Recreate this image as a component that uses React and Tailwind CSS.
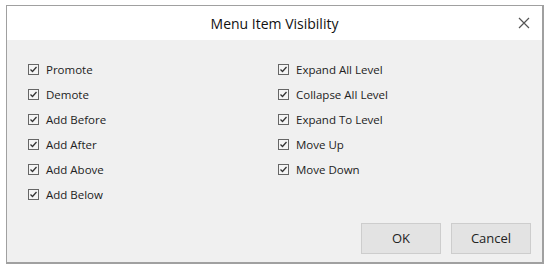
const left = ["Promote", "Demote", "Add Before", "Add After", "Add Above", "Add Below"];
const right = ["Expand All Level", "Collapse All Level", "Expand To Level", "Move Up", "Move Down"];

function Check({ label }) {
  return (
    <label className="flex h-[25px] items-center gap-[7px]">
      <span className="flex h-[11px] w-[11px] items-center justify-center border border-[#666] bg-[#f4f4f4]">
        <svg width="9" height="9" viewBox="0 0 9 9" fill="none">
          <path d="M1.5 4.5 L3.5 6.5 L7.5 2" stroke="#333" strokeWidth="1.3" />
        </svg>
      </span>
      <span className="text-[11.5px] text-[#222]">{label}</span>
    </label>
  );
}

export default function App() {
  return (
    <div
      className="h-[270px] w-[549px] bg-white pl-[6px] pt-[5px]"
      style={{ fontFamily: '"Segoe UI", "Open Sans", "Noto Sans", sans-serif' }}
    >
      <div className="flex h-[259px] w-[538px] flex-col border border-[#a0a0a0] border-r-2 border-b-2 bg-[#f0f0f0]">
        {/* Header */}
        <div className="relative flex h-[34px] items-center justify-center bg-white">
          <span className="text-[14px] font-medium text-[#111]">Menu Item Visibility</span>
          <svg
            className="absolute right-[12px] top-[11px]"
            width="12"
            height="12"
            viewBox="0 0 12 12"
          >
            <path d="M1 1 L11 11 M11 1 L1 11" stroke="#555" strokeWidth="1.2" />
          </svg>
        </div>

        {/* Options */}
        <div className="flex flex-1 pl-[21px] pt-[17px]">
          <div className="w-[250px]">
            {left.map((l) => (
              <Check key={l} label={l} />
            ))}
          </div>
          <div>
            {right.map((l) => (
              <Check key={l} label={l} />
            ))}
          </div>
        </div>

        {/* Footer */}
        <div className="flex justify-end gap-[10px] pb-[8px] pr-[11px]">
          <button className="h-[31px] w-[80px] border border-[#cdcdcd] bg-[#e3e3e3] text-[13px] text-[#222]">
            OK
          </button>
          <button className="h-[31px] w-[80px] border border-[#cdcdcd] bg-[#e3e3e3] text-[13px] text-[#222]">
            Cancel
          </button>
        </div>
      </div>
    </div>
  );
}
